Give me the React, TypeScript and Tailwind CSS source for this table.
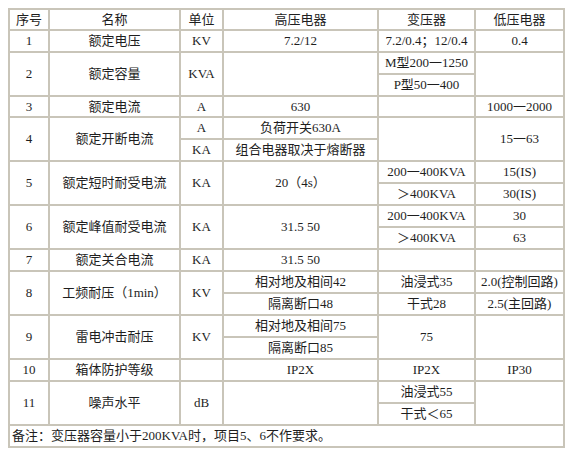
import type { ReactNode } from "react";

const font = {
  fontFamily: '"Liberation Serif", "Noto Sans CJK SC", serif',
};

function Td({
  children,
  rowSpan,
  colSpan,
  left = false,
}: {
  children?: ReactNode;
  rowSpan?: number;
  colSpan?: number;
  left?: boolean;
}) {
  return (
    <td
      rowSpan={rowSpan}
      colSpan={colSpan}
      className={`border-2 border-[#c9c5b9] px-0.5 py-0 align-middle leading-[18px] whitespace-nowrap ${
        left ? "text-left" : "text-center"
      }`}
    >
      {children}
    </td>
  );
}

export default function App() {
  const row = "h-[22px]";
  return (
    <div className="w-[576px] h-[459px] bg-white pt-[8px] pl-[8px]">
      <table
        className="table-fixed border-collapse border-2 border-[#c9c5b9] text-[13px] text-[#1e1e1e]"
        style={font}
      >
        <colgroup>
          <col className="w-[40px]" />
          <col className="w-[131px]" />
          <col className="w-[43px]" />
          <col className="w-[155px]" />
          <col className="w-[97px]" />
          <col className="w-[89px]" />
        </colgroup>
        <tbody>
          <tr className="h-[21px]">
            <Td>序号</Td>
            <Td>名称</Td>
            <Td>单位</Td>
            <Td>高压电器</Td>
            <Td>变压器</Td>
            <Td>低压电器</Td>
          </tr>
          <tr className={row}>
            <Td>1</Td>
            <Td>额定电压</Td>
            <Td>KV</Td>
            <Td>7.2/12</Td>
            <Td>7.2/0.4；12/0.4</Td>
            <Td>0.4</Td>
          </tr>
          <tr className={row}>
            <Td rowSpan={2}>2</Td>
            <Td rowSpan={2}>额定容量</Td>
            <Td rowSpan={2}>KVA</Td>
            <Td rowSpan={2} />
            <Td>M型200一1250</Td>
            <Td rowSpan={2} />
          </tr>
          <tr className={row}>
            <Td>P型50一400</Td>
          </tr>
          <tr className="h-[21px]">
            <Td>3</Td>
            <Td>额定电流</Td>
            <Td>A</Td>
            <Td>630</Td>
            <Td />
            <Td>1000一2000</Td>
          </tr>
          <tr className={row}>
            <Td rowSpan={2}>4</Td>
            <Td rowSpan={2}>额定开断电流</Td>
            <Td>A</Td>
            <Td>负荷开关630A</Td>
            <Td rowSpan={2} />
            <Td rowSpan={2}>15一63</Td>
          </tr>
          <tr className={row}>
            <Td>KA</Td>
            <Td>组合电器取决于熔断器</Td>
          </tr>
          <tr className={row}>
            <Td rowSpan={2}>5</Td>
            <Td rowSpan={2}>额定短时耐受电流</Td>
            <Td rowSpan={2}>KA</Td>
            <Td rowSpan={2}>20（4s）</Td>
            <Td>200一400KVA</Td>
            <Td>15(IS)</Td>
          </tr>
          <tr className={row}>
            <Td>＞400KVA</Td>
            <Td>30(IS)</Td>
          </tr>
          <tr className={row}>
            <Td rowSpan={2}>6</Td>
            <Td rowSpan={2}>额定峰值耐受电流</Td>
            <Td rowSpan={2}>KA</Td>
            <Td rowSpan={2}>31.5 50</Td>
            <Td>200一400KVA</Td>
            <Td>30</Td>
          </tr>
          <tr className={row}>
            <Td>＞400KVA</Td>
            <Td>63</Td>
          </tr>
          <tr className={row}>
            <Td>7</Td>
            <Td>额定关合电流</Td>
            <Td>KA</Td>
            <Td>31.5 50</Td>
            <Td />
            <Td />
          </tr>
          <tr className={row}>
            <Td rowSpan={2}>8</Td>
            <Td rowSpan={2}>工频耐压（1min）</Td>
            <Td rowSpan={2}>KV</Td>
            <Td>相对地及相间42</Td>
            <Td>油浸式35</Td>
            <Td>2.0(控制回路)</Td>
          </tr>
          <tr className={row}>
            <Td>隔离断口48</Td>
            <Td>干式28</Td>
            <Td>2.5(主回路)</Td>
          </tr>
          <tr className={row}>
            <Td rowSpan={2}>9</Td>
            <Td rowSpan={2}>雷电冲击耐压</Td>
            <Td rowSpan={2}>KV</Td>
            <Td>相对地及相间75</Td>
            <Td rowSpan={2}>75</Td>
            <Td rowSpan={2} />
          </tr>
          <tr className={row}>
            <Td>隔离断口85</Td>
          </tr>
          <tr className={row}>
            <Td>10</Td>
            <Td>箱体防护等级</Td>
            <Td />
            <Td>IP2X</Td>
            <Td>IP2X</Td>
            <Td>IP30</Td>
          </tr>
          <tr className={row}>
            <Td rowSpan={2}>11</Td>
            <Td rowSpan={2}>噪声水平</Td>
            <Td rowSpan={2}>dB</Td>
            <Td rowSpan={2} />
            <Td>油浸式55</Td>
            <Td rowSpan={2} />
          </tr>
          <tr className={row}>
            <Td>干式＜65</Td>
          </tr>
          <tr className={row}>
            <Td colSpan={6} left>
              备注：变压器容量小于200KVA时，项目5、6不作要求。
            </Td>
          </tr>
        </tbody>
      </table>
    </div>
  );
}
